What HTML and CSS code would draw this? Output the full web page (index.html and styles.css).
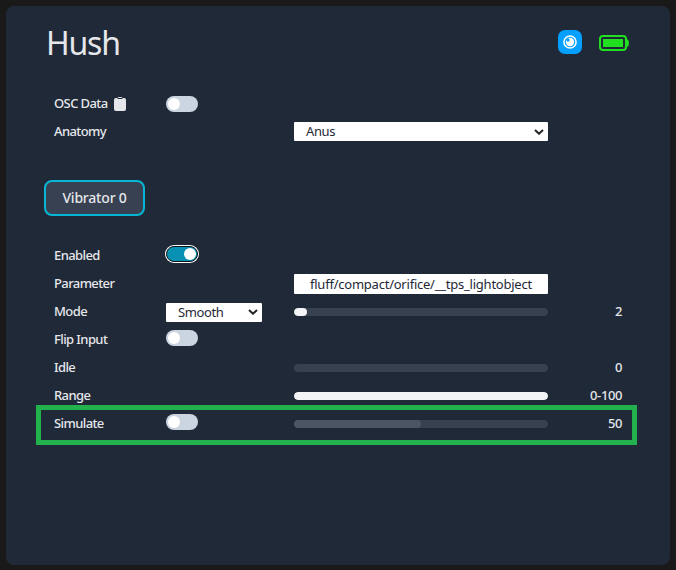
FILE: index.html
```html
<!DOCTYPE html>
<html lang="en">
<head>
<meta charset="utf-8">
<title>Hush</title>
<link rel="stylesheet" href="styles.css">
</head>
<body>
<main class="panel">
  <header class="header">
    <h1 class="title">Hush</h1>
    <div class="status">
      <svg class="eye" viewBox="0 0 24 24"><rect width="24" height="24" rx="7" fill="#059fff"/><circle cx="12" cy="12" r="6.100" fill="none" stroke="#fff" stroke-width="1.500"/><circle cx="12" cy="12" r="4.200" fill="#fff"/><circle cx="10" cy="10" r="1.700" fill="#059fff"/></svg>
      <svg class="battery" viewBox="0 0 30 16" fill="#20e020"><rect x="1" y="1" width="26" height="14" rx="3" fill="none" stroke="#20e020" stroke-width="2"/><rect x="4" y="4" width="20" height="8"/><path d="M27 4h1q2 1 2 4t-2 4h-1z"/></svg>
    </div>
  </header>
  <section class="rows device">
    <div class="row">
      <span class="label">OSC Data <svg class="clip" viewBox="0 0 12 14"><path fill="#e5e7eb" d="M2 1h1.200Q4 0 6 0t2.800 1H10q2 0 2 2v9q0 2-2 2H2q-2 0-2-2V3q0-2 2-2z"/><path d="M3.500 1.500h5" stroke="#202937"/></svg></span>
      <span class="toggle"></span>
    </div>
    <div class="row">
      <span class="label">Anatomy</span><span></span>
      <div class="select"><span class="text">Anus</span><svg class="chev" viewBox="0 0 10 6"><path d="M1 1l4 3.700L9 1"/></svg></div>
    </div>
  </section>
  <button class="tab"><span class="text">Vibrator 0</span></button>
  <section class="rows motor">
    <div class="row"><span class="label">Enabled</span><span class="toggle on"></span></div>
    <div class="row"><span class="label">Parameter</span><span></span><div class="input"><span class="text">fluff/compact/orifice/__tps_lightobject</span></div></div>
    <div class="row"><span class="label">Mode</span>
      <div class="select mode"><span class="text">Smooth</span><svg class="chev" viewBox="0 0 10 6"><path d="M1 1l4 3.700L9 1"/></svg></div>
      <div class="track"><div class="fill" style="width:13px"></div></div><span class="value">2</span></div>
    <div class="row"><span class="label">Flip Input</span><span class="toggle"></span></div>
    <div class="row"><span class="label">Idle</span><span></span><div class="track"></div><span class="value">0</span></div>
    <div class="row"><span class="label">Range</span><span></span><div class="track"><div class="fill" style="width:100%"></div></div><span class="value">0-100</span></div>
    <div class="row marked"><span class="label">Simulate</span><span class="toggle"></span><div class="track"><div class="fill dim" style="width:50%"></div></div><span class="value">50</span></div>
  </section>
</main>
</body>
</html>
```
FILE: styles.css
```css
*, *::before, *::after { box-sizing: border-box; }
body {
  margin: 0;
  padding: 6px 6px 5px;
  height: 570px;
  background: #19191a;
  color: #e5e7eb;
  font: 13px/28px "Noto Sans", "Open Sans", sans-serif;
  letter-spacing: -0.4px;
  overflow: hidden;
}
.panel {
  height: 559px;
  padding: 14px 38px;
  border-radius: 8px;
  background: #202937;
}
.header { display: flex; height: 70px; justify-content: space-between; }
.title { margin: 0 0 0 2px; font-size: 32px; line-height: 46px; font-weight: 400; letter-spacing: -1.2px; }
.status { display: flex; gap: 17px; margin-right: 3px; padding-top: 10px; }
.eye { width: 24px; height: 24px; }
.battery { width: 30px; height: 16px; margin-top: 5px; }
.rows { padding-left: 10px; }
.row {
  position: relative;
  display: grid;
  grid-template-columns: 112px 128px 254px 74px;
  align-items: center;
  height: 28px;
}
.label, .value { white-space: nowrap; position: relative; top: -1px; font-weight: 500; letter-spacing: -0.6px; }
.value { text-align: right; letter-spacing: -0.4px; }
.clip { width: 12px; height: 14px; margin-left: 4px; vertical-align: -3px; }
.toggle { width: 32px; height: 16px; padding: 2px; border-radius: 8px; background: #cbd5e1; }
.toggle::before { content: ""; display: block; width: 12px; height: 12px; border-radius: 50%; background: #fff; }
.motor .toggle { margin-top: -4px; }
.toggle.on {
  background: #0891b2;
  border: 1.5px solid #101010;
  padding: 1px;
  box-shadow: 0 0 0 1px #fff;
}
.toggle.on::before { margin-left: auto; }
.select, .input {
  display: flex;
  align-items: center;
  height: 19px;
  border-radius: 1px;
  background: #fff;
  color: #1f2937;
  line-height: 19px;
  white-space: nowrap;
}
.select { justify-content: space-between; padding: 0 4px 0 12px; }
.device .select { margin-top: -1px; }
.mode { width: 96px; }
.input { height: 20px; padding-left: 16px; letter-spacing: -0.23px; }
.chev { width: 10px; height: 6px; fill: none; stroke: #222; stroke-width: 2; }
.tab {
  display: block;
  width: 101px;
  height: 36px;
  margin: 34px 0 26px;
  padding: 0;
  border: 2px solid #06b6d4;
  border-radius: 8px;
  background: #374151;
  color: #e5e7eb;
  font: inherit;
  font-size: 14px;
  font-weight: 500;
  letter-spacing: -0.2px;
  line-height: 30px;
}
.track { height: 8px; border-radius: 4px; background: #374151; overflow: hidden; }
.fill { height: 8px; border-radius: 4px; background: #f3f4f6; }
.fill.dim { background: #4b5563; }
.marked::after {
  content: "";
  position: absolute;
  left: -18px;
  top: -5px;
  width: 601px;
  height: 40px;
  border: 5px solid #23b14d;
}
```
